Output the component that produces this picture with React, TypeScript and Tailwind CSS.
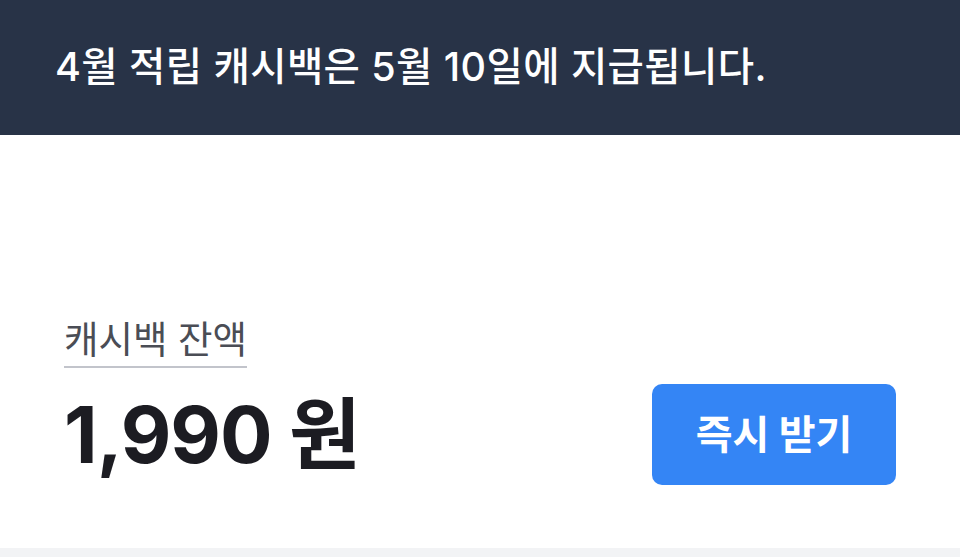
export default function App() {
  const font = { fontFamily: '"Inter", "Noto Sans CJK KR", sans-serif' };
  return (
    <div className="w-[960px] h-[557px] bg-white flex flex-col overflow-hidden" style={font}>
      <div className="h-[135px] bg-[#283347] flex items-center pl-[55px] shrink-0">
        <p className="text-white text-[39.5px] font-medium leading-none tracking-[0.4px]">
          4월 적립 캐시백은 5월 10일에 지급됩니다.
        </p>
      </div>
      <div className="flex-1 px-[64px] pt-[185px]">
        <div className="inline-block border-b-2 border-[#c2c4cb] pb-[6px]">
          <span className="text-[37.5px] leading-[40px] text-[#4a4d55] block">캐시백 잔액</span>
        </div>
        <div className="flex items-center justify-between mt-[16px]">
          <span className="text-[78px] font-bold leading-none text-[#1c1c22] tracking-[-1px]">1,990 원</span>
          <button className="w-[244px] h-[101px] rounded-[10px] bg-[#3485f5] text-white text-[40px] font-bold leading-none">
            즉시 받기
          </button>
        </div>
      </div>
      <div className="h-[9px] bg-[#f2f3f5] shrink-0" />
    </div>
  );
}
